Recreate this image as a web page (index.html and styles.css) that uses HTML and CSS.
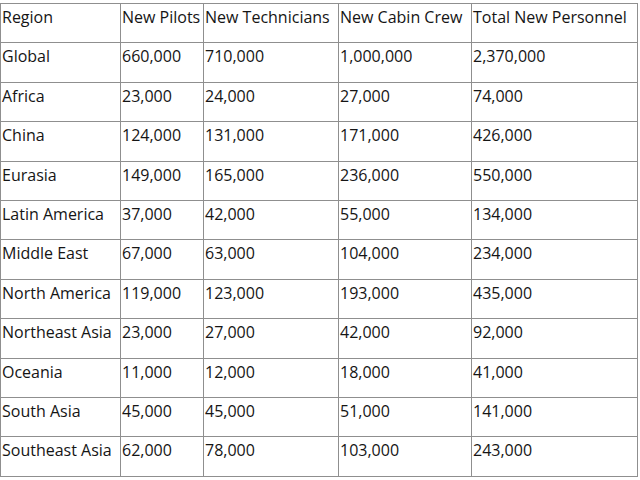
FILE: index.html
```html
<!DOCTYPE html>
<html>
<head>
<meta charset="utf-8">
<link rel="stylesheet" href="styles.css">
</head>
<body>
<table class="data">
<colgroup>
<col class="c1"><col class="c2"><col class="c3"><col class="c4"><col class="c5">
</colgroup>
<tr><td>Region</td><td>New Pilots</td><td>New Technicians</td><td>New Cabin Crew</td><td>Total New Personnel</td></tr>
<tr><td>Global</td><td>660,000</td><td>710,000</td><td>1,000,000</td><td>2,370,000</td></tr>
<tr><td>Africa</td><td>23,000</td><td>24,000</td><td>27,000</td><td>74,000</td></tr>
<tr><td>China</td><td>124,000</td><td>131,000</td><td>171,000</td><td>426,000</td></tr>
<tr><td>Eurasia</td><td>149,000</td><td>165,000</td><td>236,000</td><td>550,000</td></tr>
<tr><td>Latin America</td><td>37,000</td><td>42,000</td><td>55,000</td><td>134,000</td></tr>
<tr><td>Middle East</td><td>67,000</td><td>63,000</td><td>104,000</td><td>234,000</td></tr>
<tr><td>North America</td><td>119,000</td><td>123,000</td><td>193,000</td><td>435,000</td></tr>
<tr><td>Northeast Asia</td><td>23,000</td><td>27,000</td><td>42,000</td><td>92,000</td></tr>
<tr><td>Oceania</td><td>11,000</td><td>12,000</td><td>18,000</td><td>41,000</td></tr>
<tr><td>South Asia</td><td>45,000</td><td>45,000</td><td>51,000</td><td>141,000</td></tr>
<tr><td>Southeast Asia</td><td>62,000</td><td>78,000</td><td>103,000</td><td>243,000</td></tr>
</table>
</body>
</html>
```
FILE: styles.css
```css
html, body {
  margin: 0;
  padding: 0;
  background: #fff;
}
body {
  padding-top: 3px;
  font-family: "Open Sans", "Liberation Sans", sans-serif;
  font-size: 16px;
  color: #151515;
}
.data {
  border-collapse: collapse;
  table-layout: fixed;
  width: 637px;
}
.c1 { width: 120px; }
.c2 { width: 83px; }
.c3 { width: 135px; }
.c4 { width: 133px; }
.c5 { width: 166px; }
.data td {
  border: 1px solid #8f8f8f;
  height: 39.4px;
  box-sizing: border-box;
  padding: 2px 0 0 1px;
  vertical-align: top;
  line-height: 22px;
  white-space: nowrap;
}
```
